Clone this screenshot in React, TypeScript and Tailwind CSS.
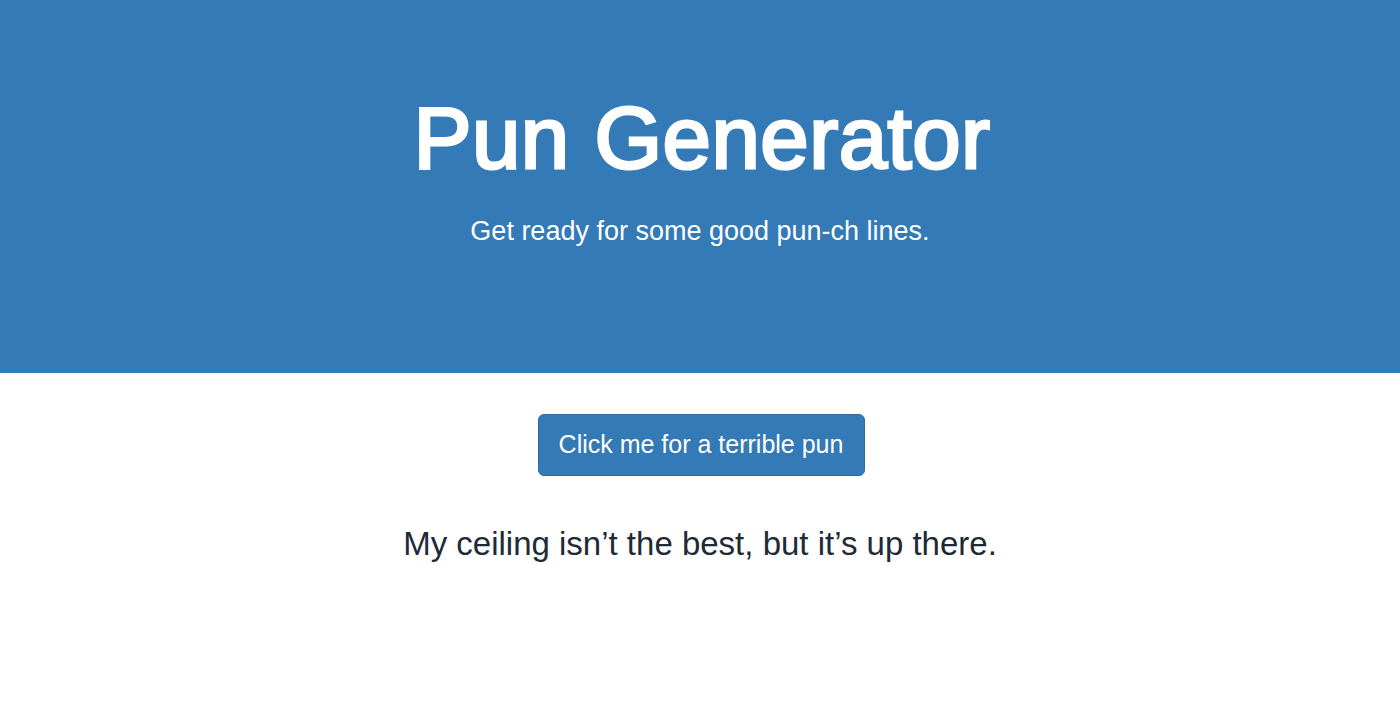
import React from "react";

export default function App() {
  return (
    <div className="min-h-[710px] bg-white font-['Liberation_Sans',Arial,sans-serif]">
      <header className="h-[373px] bg-[#337ab7] flex flex-col items-center pt-[88px]">
        <h1 className="text-white text-[87px] leading-[100px] tracking-[0.5px] ml-[4px] font-medium [-webkit-text-stroke:3px_#ffffff]">
          Pun Generator
        </h1>
        <p className="text-white text-[27px] leading-[30px] mt-[28px]">
          Get ready for some good pun-ch lines.
        </p>
      </header>
      <main className="flex flex-col items-center pt-[41px]">
        <button className="h-[62px] w-[327px] ml-[2px] rounded-[6px] bg-[#337ab7] border border-[#2e6da4] text-white text-[25px]">
          Click me for a terrible pun
        </button>
        <p className="mt-[48px] text-[33px] leading-[40px] text-[#1e2a36]">
          My ceiling isn’t the best, but it’s up there.
        </p>
      </main>
    </div>
  );
}
